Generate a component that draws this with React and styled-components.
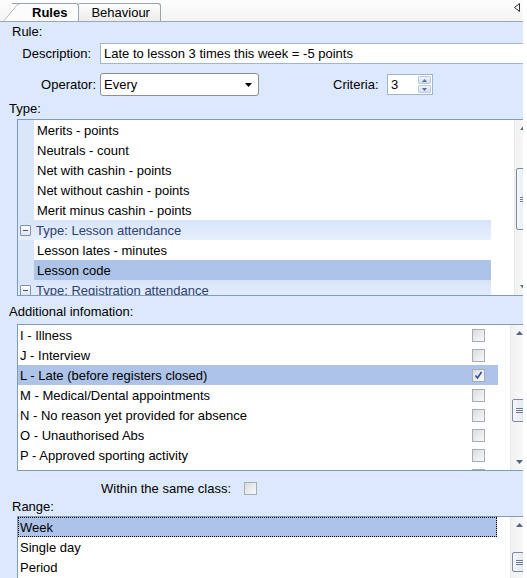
import React from "react";
import styled, { createGlobalStyle } from "styled-components";

const Global = createGlobalStyle`
  html, body {
    margin: 0;
    padding: 0;
    background: #ffffff;
    overflow: hidden;
  }
  body {
    font-family: "Liberation Sans", Arial, sans-serif;
    font-size: 13px;
    color: #000;
  }
`;

const Page = styled.div`
  width: 527px;
  height: 578px;
  overflow: hidden;
  background: #ffffff;
`;

const TabStrip = styled.div`
  height: 22px;
  display: flex;
  align-items: flex-end;
  padding-left: 12px;
  background: linear-gradient(#fdfdfd, #f4f4f4);
  border-bottom: 1px solid #9aa6b6;
  width: 523px;
  box-sizing: border-box;
`;

const Tab = styled.div`
  position: relative;
  height: 18px;
  line-height: 18px;
  box-sizing: border-box;
  border-top: 1px solid #9aa3ad;
  border-right: 1px solid #9aa3ad;
  border-top-right-radius: 3px;
  padding: ${(p) => (p.$active ? "0 11px 0 20px" : "0 10px 0 12px")};
  font-weight: ${(p) => (p.$active ? "bold" : "normal")};
  background: ${(p) => (p.$active ? "#fcfcfc" : "linear-gradient(#fdfdfd, #ececec)")};
  z-index: ${(p) => (p.$active ? 2 : 1)};
  color: #000;

  ${(p) =>
    p.$active &&
    `
    &::before {
      content: "";
      position: absolute;
      left: -9px;
      top: -1px;
      bottom: 0;
      width: 14px;
      background: #fcfcfc;
      border-left: 1px solid #9aa3ad;
      border-top: 1px solid #9aa3ad;
      border-top-left-radius: 3px;
      transform: skewX(-40deg);
      transform-origin: bottom left;
      z-index: -1;
    }
  `}
`;

const TabLabel = styled.span`
  position: relative;
`;

const StripArrow = styled.div`
  margin-left: auto;
  align-self: flex-start;
  margin-top: 3px;
  margin-right: 3px;
  display: flex;
`;

const Panel = styled.div`
  width: 523px;
  height: 556px;
  background: #dce8fb;
  overflow: hidden;
`;

const SectionLabel = styled.div`
  padding-left: ${(p) => p.$indent || 9}px;
  height: ${(p) => p.$h}px;
  line-height: ${(p) => p.$lh}px;
  white-space: nowrap;
`;

const FieldRow = styled.div`
  display: flex;
  align-items: center;
  margin-top: ${(p) => p.$mt}px;
  height: ${(p) => p.$h}px;
`;

const FieldLabel = styled.div`
  width: ${(p) => p.$w}px;
  text-align: right;
  flex-shrink: 0;
  margin-right: ${(p) => p.$gap}px;
  margin-left: ${(p) => p.$ml || 0}px;
  white-space: nowrap;
`;

const TextBox = styled.div`
  width: 440px;
  flex-shrink: 0;
  height: 21px;
  line-height: 20px;
  box-sizing: border-box;
  background: #fff;
  border: 1px solid #a5b5c8;
  border-right: none;
  padding-left: 3px;
  white-space: nowrap;
`;

const Select = styled.div`
  width: 159px;
  height: 23px;
  box-sizing: border-box;
  border: 1px solid #8e8f8f;
  border-radius: 3px;
  background: #fff;
  display: flex;
  align-items: center;
  justify-content: space-between;
  padding: 0 6px 0 3px;
  flex-shrink: 0;
`;

const Spin = styled.div`
  width: 46px;
  height: 21px;
  box-sizing: border-box;
  border: 1px solid #a5b5c8;
  background: #fff;
  display: flex;
  align-items: stretch;
  padding: 1px 1px 1px 3px;
  flex-shrink: 0;
`;

const SpinValue = styled.div`
  flex: 1;
  line-height: 18px;
`;

const SpinButtons = styled.div`
  width: 13px;
  display: flex;
  flex-direction: column;
  gap: 1px;
`;

const SpinButton = styled.div`
  flex: 1;
  border: 1px solid #bccbe0;
  border-radius: 1px;
  background: linear-gradient(#eef3fa, #d3dfef);
  display: flex;
  align-items: center;
  justify-content: center;
`;

const ListBox = styled.div`
  margin-left: 17px;
  width: ${(p) => p.$w}px;
  height: ${(p) => p.$h}px;
  box-sizing: border-box;
  border: 1px solid #7f9db9;
  background: #fff;
  display: flex;
  overflow: hidden;
  flex-shrink: 0;
`;

const ListRows = styled.div`
  flex: 1;
  overflow: hidden;
`;

const TreeRow = styled.div`
  display: flex;
  width: 473px;
  height: 20px;
  line-height: 21px;
  white-space: nowrap;
`;

const Gutter = styled.div`
  width: 16px;
  background: #dbe7f8;
  flex-shrink: 0;
`;

const TreeCell = styled.div`
  flex: 1;
  padding-left: 3px;
  background: ${(p) => (p.$selected ? "#adc4e8" : "#ffffff")};
`;

const GroupRow = styled.div`
  display: flex;
  align-items: center;
  width: 473px;
  height: 20px;
  white-space: nowrap;
  background: linear-gradient(#d7e4f9, #e7effc);
  color: #2f4170;
`;

const ExpandBox = styled.div`
  width: 11px;
  height: 11px;
  box-sizing: border-box;
  margin: 0 5px 0 2px;
  border: 1px solid #8292ad;
  border-radius: 1px;
  background: linear-gradient(#ffffff, #dde5f0);
  position: relative;
  flex-shrink: 0;

  &::after {
    content: "";
    position: absolute;
    left: 2px;
    right: 2px;
    top: 4px;
    height: 1px;
    background: #44567a;
  }
`;

const ItemRow = styled.div`
  display: flex;
  align-items: center;
  justify-content: space-between;
  width: ${(p) => p.$w}px;
  height: 20px;
  box-sizing: border-box;
  padding: 0 ${(p) => p.$pr || 0}px 0 2px;
  white-space: nowrap;
  background: ${(p) => (p.$selected ? "#adc4e8" : "transparent")};
  outline: ${(p) => (p.$focus ? "1px dotted #000" : "none")};
  outline-offset: -1px;
`;

const Check = styled.div`
  width: 13px;
  height: 13px;
  box-sizing: border-box;
  border: 1px solid #a6adb7;
  background: linear-gradient(135deg, #d9dcdf, #f9f9f9);
  display: flex;
  align-items: center;
  justify-content: center;
  flex-shrink: 0;
`;

const ScrollTrack = styled.div`
  position: relative;
  width: 17px;
  flex-shrink: 0;
  margin-left: ${(p) => p.$ml || 0}px;
  background: linear-gradient(to right, #f1f1f1, #fbfbfb);
  border-left: 1px solid #e9e9e9;
  display: flex;
  flex-direction: column;
  justify-content: space-between;
  align-items: center;
  padding: 6px 0;
  box-sizing: border-box;
`;

const Thumb = styled.div`
  position: absolute;
  left: 1px;
  width: 15px;
  top: ${(p) => p.$top}px;
  height: ${(p) => p.$height}px;
  box-sizing: border-box;
  border: 1px solid #7d8aa3;
  border-radius: 2px;
  background: linear-gradient(to right, #f4f6fa, #dfe5ee);
  display: flex;
  align-items: center;
  justify-content: center;
`;

const WithinRow = styled.div`
  display: flex;
  align-items: center;
  gap: 13px;
  padding-left: 101px;
  margin-top: 8px;
  height: 18px;
`;

const Tri = ({ dir = "down", color = "#556583", w = 7, h = 4 }) => (
  <svg width={w} height={h} viewBox={`0 0 ${w} ${h}`}>
    <polygon
      points={
        dir === "up"
          ? `0,${h} ${w},${h} ${w / 2},0`
          : `0,0 ${w},0 ${w / 2},${h}`
      }
      fill={color}
    />
  </svg>
);

const Grip = () => (
  <svg width="7" height="7" viewBox="0 0 7 7">
    <path d="M0 1.5h7M0 3.5h7M0 5.5h7" stroke="#6e7d98" strokeWidth="1" />
  </svg>
);

const CheckMark = () => (
  <svg width="9" height="9" viewBox="0 0 9 9">
    <path d="M1.5 4.5 L3.5 7 L7.5 1" stroke="#2c4a9c" strokeWidth="1.5" fill="none" />
  </svg>
);

const Scrollbar = ({ thumbTop, thumbHeight, ml }) => (
  <ScrollTrack $ml={ml}>
    <Tri dir="up" />
    <Thumb $top={thumbTop} $height={thumbHeight}>
      {thumbHeight > 14 && <Grip />}
    </Thumb>
    <Tri dir="down" />
  </ScrollTrack>
);

const typeItems = [
  { label: "Merits - points" },
  { label: "Neutrals - count" },
  { label: "Net with cashin - points" },
  { label: "Net without cashin - points" },
  { label: "Merit minus cashin - points" },
  { label: "Type: Lesson attendance", group: true },
  { label: "Lesson lates - minutes" },
  { label: "Lesson code", selected: true },
  { label: "Type: Registration attendance", group: true },
];

const codes = [
  { label: "I - Illness" },
  { label: "J - Interview" },
  { label: "L - Late (before registers closed)", selected: true, checked: true },
  { label: "M - Medical/Dental appointments" },
  { label: "N - No reason yet provided for absence" },
  { label: "O - Unauthorised Abs" },
  { label: "P - Approved sporting activity" },
  { label: "S - Study leave" },
];

const ranges = ["Week", "Single day", "Period", "Term"];

export default function App() {
  return (
    <Page>
      <Global />
      <TabStrip>
        <Tab $active>
          <TabLabel>Rules</TabLabel>
        </Tab>
        <Tab>Behaviour</Tab>
        <StripArrow>
          <svg width="6" height="9" viewBox="0 0 6 9">
            <polygon points="5.5,0.5 5.5,8.5 0.5,4.5" fill="none" stroke="#333" strokeWidth="1" />
          </svg>
        </StripArrow>
      </TabStrip>

      <Panel>
        <SectionLabel $indent={12} $h={18} $lh={19}>
          Rule:
        </SectionLabel>

        <FieldRow $mt={3} $h={21}>
          <FieldLabel $w={91} $gap={9}>
            Description:
          </FieldLabel>
          <TextBox>Late to lesson 3 times this week = -5 points</TextBox>
        </FieldRow>

        <FieldRow $mt={9} $h={23}>
          <FieldLabel $w={96} $gap={4}>
            Operator:
          </FieldLabel>
          <Select>
            <span>Every</span>
            <Tri color="#000" w={7} h={4} />
          </Select>
          <FieldLabel $w={45} $gap={9} $ml={74}>
            Criteria:
          </FieldLabel>
          <Spin>
            <SpinValue>3</SpinValue>
            <SpinButtons>
              <SpinButton>
                <Tri dir="up" w={5} h={3} color="#5a6e95" />
              </SpinButton>
              <SpinButton>
                <Tri dir="down" w={5} h={3} color="#5a6e95" />
              </SpinButton>
            </SpinButtons>
          </Spin>
        </FieldRow>

        <SectionLabel $h={23} $lh={26}>
          Type:
        </SectionLabel>

        <ListBox $w={515} $h={177}>
          <ListRows>
            {typeItems.map((it) =>
              it.group ? (
                <GroupRow key={it.label}>
                  <ExpandBox />
                  {it.label}
                </GroupRow>
              ) : (
                <TreeRow key={it.label}>
                  <Gutter />
                  <TreeCell $selected={it.selected}>{it.label}</TreeCell>
                </TreeRow>
              )
            )}
          </ListRows>
          <Scrollbar thumbTop={48} thumbHeight={62} />
        </ListBox>

        <SectionLabel $h={28} $lh={31}>
          Additional infomation:
        </SectionLabel>

        <ListBox $w={511} $h={147}>
          <ListRows>
            {codes.map((c) => (
              <ItemRow key={c.label} $w={480} $pr={13} $selected={c.selected}>
                <span>{c.label}</span>
                <Check>{c.checked && <CheckMark />}</Check>
              </ItemRow>
            ))}
          </ListRows>
          <Scrollbar thumbTop={74} thumbHeight={23} />
        </ListBox>

        <WithinRow>
          <span>Within the same class:</span>
          <Check />
        </WithinRow>

        <SectionLabel $indent={12} $h={19} $lh={19}>
          Range:
        </SectionLabel>

        <ListBox $w={511} $h={80}>
          <ListRows>
            {ranges.map((r, i) => (
              <ItemRow key={r} $w={479} $selected={i === 0} $focus={i === 0}>
                <span>{r}</span>
              </ItemRow>
            ))}
          </ListRows>
          <Scrollbar thumbTop={35} thumbHeight={20} />
        </ListBox>
      </Panel>
    </Page>
  );
}
